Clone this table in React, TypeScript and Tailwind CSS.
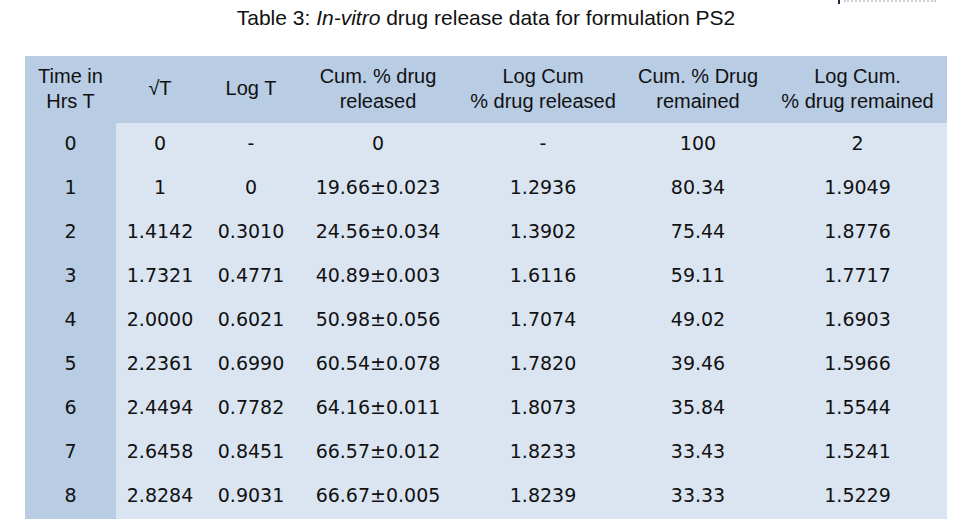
import React from "react";

const rows: string[][] = [
  ["0", "0", "-", "0", "-", "100", "2"],
  ["1", "1", "0", "19.66±0.023", "1.2936", "80.34", "1.9049"],
  ["2", "1.4142", "0.3010", "24.56±0.034", "1.3902", "75.44", "1.8776"],
  ["3", "1.7321", "0.4771", "40.89±0.003", "1.6116", "59.11", "1.7717"],
  ["4", "2.0000", "0.6021", "50.98±0.056", "1.7074", "49.02", "1.6903"],
  ["5", "2.2361", "0.6990", "60.54±0.078", "1.7820", "39.46", "1.5966"],
  ["6", "2.4494", "0.7782", "64.16±0.011", "1.8073", "35.84", "1.5544"],
  ["7", "2.6458", "0.8451", "66.57±0.012", "1.8233", "33.43", "1.5241"],
  ["8", "2.8284", "0.9031", "66.67±0.005", "1.8239", "33.33", "1.5229"],
];

const widths = ["w-[91px]", "w-[88px]", "w-[94px]", "w-[160px]", "w-[170px]", "w-[140px]", "w-[179px]"];

export default function App() {
  return (
    <div className="relative w-[956px] h-[528px] bg-white overflow-hidden">
      <div className="absolute left-[838px] top-0 flex items-start gap-[4px]">
        <div className="w-[2px] h-[4px] bg-[#1f2a44]" />
        <div className="w-[92px] h-0 border-b-2 border-dotted border-[#d0d0d0]" />
      </div>
      <div className="ml-[25px] w-[922px]">
        <div className="h-[56px] pt-[6px] text-center text-[21px] leading-[24px] text-[#111] font-['Liberation_Sans',sans-serif]">
          Table 3: <i>In-vitro</i> drug release data for formulation PS2
        </div>
        <table className="border-collapse table-fixed w-[922px]">
          <thead>
            <tr className="h-[67px] bg-[#b8cce4] text-[20px] leading-[25px] text-[#111] font-['Liberation_Sans',sans-serif]">
              <th className={`${widths[0]} font-normal text-center align-middle pb-[2px]`}>
                Time in
                <br />
                Hrs T
              </th>
              <th className={`${widths[1]} font-normal text-center align-middle pb-[2px]`}>√T</th>
              <th className={`${widths[2]} font-normal text-center align-middle pb-[2px]`}>Log T</th>
              <th className={`${widths[3]} font-normal text-center align-middle pb-[2px]`}>
                Cum. % drug
                <br />
                released
              </th>
              <th className={`${widths[4]} font-normal text-center align-middle pb-[2px]`}>
                Log Cum
                <br />% drug released
              </th>
              <th className={`${widths[5]} font-normal text-center align-middle pb-[2px]`}>
                Cum. % Drug
                <br />
                remained
              </th>
              <th className={`${widths[6]} font-normal text-center align-middle pb-[2px]`}>
                Log Cum.
                <br />% drug remained
              </th>
            </tr>
          </thead>
          <tbody>
            {rows.map((r, i) => (
              <tr key={i} className="h-[44px] text-[19px] text-[#111] font-['DejaVu_Sans',sans-serif]">
                {r.map((c, j) => (
                  <td
                    key={j}
                    className={`${j === 0 ? "bg-[#b8cce4]" : "bg-[#dbe5f1]"} text-center align-middle p-0 pb-[3px]`}
                  >
                    {c}
                  </td>
                ))}
              </tr>
            ))}
          </tbody>
        </table>
      </div>
    </div>
  );
}
